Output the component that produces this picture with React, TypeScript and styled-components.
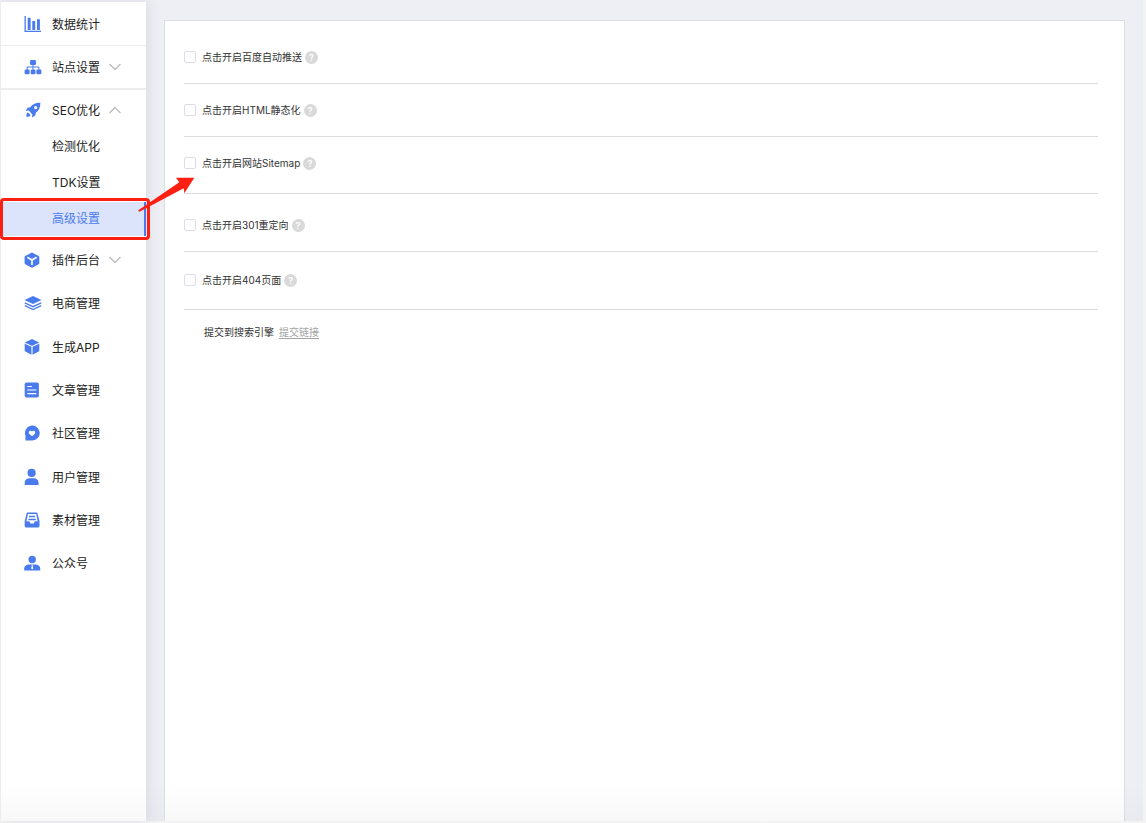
import React from 'react';
import styled, { createGlobalStyle, css } from 'styled-components';

const BLUE = '#4a7bed';

const GlobalStyle = createGlobalStyle`
  *, *::before, *::after { box-sizing: border-box; }
  body {
    margin: 0;
    background: #eeeff4;
    color: #222;
    font-family: Inter, "Noto Sans CJK SC", sans-serif;
    font-size: 12px;
  }
  ul { list-style: none; margin: 0; padding: 0; }
`;

const Page = styled.div`
  display: flex;
  min-height: 100vh;
  border: solid #f3f3f4;
  border-width: 0 3px 2px 1px;
  background: linear-gradient(to top, #e8eaef 0, #eeeff4 36px);
`;

const Sidebar = styled.nav`
  position: relative;
  z-index: 1;
  flex: 0 0 145px;
  margin-top: 2px;
  background: linear-gradient(to top, #f8f8f8 0, #fff 36px);
  box-shadow: 2px 0 12px rgba(60, 60, 90, 0.11);
`;

const itemStyles = css`
  display: flex;
  align-items: center;
  width: 100%;
  padding: 0 0 0 23px;
  border: 0;
  background: none;
  color: #222;
  font: inherit;
  line-height: 16px;
  text-align: left;
  text-decoration: none;
  cursor: pointer;
`;

const Entry = styled.li<{ $line?: number; $groupEnd?: boolean }>`
  border-bottom: ${(p) => p.$line ?? 0}px solid #ededee;
  margin-bottom: ${(p) => (p.$groupEnd ? 1 : 0)}px;
`;

const ItemLink = styled.a`
  ${itemStyles}
  height: 43px;
`;

const ItemButton = styled.button<{ $height?: number }>`
  ${itemStyles}
  height: ${(p) => p.$height ?? 43}px;
`;

const ItemLabel = styled.span`
  padding-top: 2px;
`;

const Icon = styled.svg`
  flex: none;
  width: 18px;
  height: 18px;
  margin-right: 10px;
  fill: ${BLUE};
`;

const ChevronIcon = styled.svg<{ $open?: boolean }>`
  width: 12px;
  height: 8px;
  margin-left: 9px;
  fill: none;
  stroke: #bcbcbc;
  stroke-width: 1.4;
  transform: ${(p) => (p.$open ? 'rotate(180deg)' : 'none')};
`;

const SubList = styled.ul`
  padding-bottom: 1px;
`;

const SubItem = styled.li<{ $active?: boolean }>`
  position: relative;
  height: ${(p) => (p.$active ? 34 : 36)}px;
  margin: ${(p) => (p.$active ? '1px 0' : '0')};
  background: ${(p) => (p.$active ? '#dce4fc' : 'none')};
  border-right: ${(p) => (p.$active ? `2px solid ${BLUE}` : '0')};
`;

const SubLink = styled.a<{ $active?: boolean }>`
  display: flex;
  align-items: center;
  height: 100%;
  padding: 0 0 3px 51px;
  color: ${(p) => (p.$active ? BLUE : '#222')};
  text-decoration: none;
`;

const Highlight = styled.span`
  position: absolute;
  inset: -4px -6px -4px -1px;
  border: 3px solid #fd1f12;
  border-radius: 4px;
  pointer-events: none;
`;

const Arrow = styled.svg`
  position: absolute;
  left: 136px;
  top: -26px;
  width: 60px;
  height: 38px;
  fill: #fd1f12;
  pointer-events: none;
`;

const Main = styled.main`
  display: flex;
  flex: 1;
  min-width: 0;
  padding: 20px 18px 0;
`;

const Panel = styled.section`
  flex: 1;
  padding: 0 26px 0 19px;
  border: 1px solid #dcdde0;
  border-bottom: 0;
  background: linear-gradient(to top, #f8f8f8 0, #fff 36px);
  color: #333;
  font-size: 10px;
  line-height: 16px;
`;

const SettingRow = styled.div<{ $top: number; $bottom: number }>`
  display: flex;
  align-items: center;
  padding: ${(p) => p.$top}px 0 ${(p) => p.$bottom}px;
  border-bottom: 1px solid #dcdddf;
`;

const Checkbox = styled.input`
  appearance: none;
  width: 12px;
  height: 12px;
  margin: 0 6px 0 0;
  border: 1px solid #dcdde6;
  border-radius: 2px;
  background: #fff;
  &:checked { background: ${BLUE}; }
`;

const HelpButton = styled.button`
  display: flex;
  align-items: center;
  justify-content: center;
  width: 13px;
  height: 13px;
  margin-left: 3px;
  padding: 0;
  border: 0;
  border-radius: 50%;
  background: #d9d9d9;
  color: #fff;
  font: 600 9px/13px Inter, sans-serif;
`;

const SubmitRow = styled.div`
  display: flex;
  gap: 5px;
  padding: 14px 0 14px 20px;
`;

const SubmitLink = styled.a`
  color: #a3a3a3;
  text-decoration: underline;
  text-underline-offset: 2px;
`;

const shapes: Record<string, React.ReactNode> = {
  chart: (
    <path d="M.5 1h1.300v14.700h15.200V17H.5zM3.700 2.800h2.900v12.200H3.700zM8.300 6h2.900v9H8.300zM13 4.200h2.900v10.800H13z" />
  ),
  sitemap: (
    <>
      <rect x="6" y="2" width="6" height="5" rx="1.200" />
      <rect x=".6" y="11.600" width="5" height="4.600" rx="1.200" />
      <rect x="6.700" y="11.600" width="4.800" height="4.600" rx="1.200" />
      <rect x="12.400" y="11.600" width="5" height="4.600" rx="1.200" />
      <path d="M9 6v6M3.100 12V9h11.800v3" fill="none" stroke={BLUE} />
    </>
  ),
  rocket: (
    <>
      <path
        fillRule="evenodd"
        d="M16.400 1.800C11.400 1.700 8.300 3.500 6.300 6.200L3.500 6.800 1.700 9.900l3-.3 3.700 3.800-.4 3.100 3.300-1.900.5-2.800c2.900-2.200 4.700-5.200 4.600-10zM11.700 5.100a1.600 1.600 0 1 1 0 3.200 1.600 1.600 0 0 1 0-3.200z"
      />
      <path d="M3.800 11.200l2.900 3c-1 1.400-2.700 1.800-4.300 1.600-.2-1.800.1-3.500 1.400-4.600z" />
    </>
  ),
  plugin: (
    <>
      <path d="M8 1.400l6.700 3.700q.6.400.6 1v6.100q0 .6-.6 1L8.600 16.600q-.6.300-1.200 0L1.200 13.200q-.6-.4-.6-1V6.100q0-.6.6-1L7.400 1.700z" />
      <path d="M3.400 6.300L8 9l4.600-2.700M8 9v4.900" fill="none" stroke="#fff" strokeWidth="1.600" />
    </>
  ),
  layers: (
    <>
      <path d="M9 2l8.500 4L9 10 .5 6z" />
      <path d="M.8 8.900L9 12.700l8.200-3.800M.8 11.700L9 15.500l8.200-3.800" fill="none" stroke={BLUE} strokeWidth="1.300" />
    </>
  ),
  box: (
    <>
      <path d="M8 1l6.700 3.300q.6.400.6 1v7.200q0 .6-.6 1L8 17 1.300 13.500q-.6-.4-.6-1V5.300q0-.6.6-1z" />
      <path d="M.5 5.100L8 8.500l7.500-3.400M8 8.500V17" fill="none" stroke="#fff" strokeWidth="1.100" />
    </>
  ),
  article: (
    <>
      <rect x=".7" y="1.500" width="14.200" height="15" rx="1.800" />
      <path d="M3.300 5.500h4.600M3.300 9h9M3.300 12.600h9" stroke="#fff" strokeWidth="1.200" />
    </>
  ),
  community: (
    <>
      <path d="M1.500 16.400V11.800A7.400 7.400 0 1 1 8.100 16.400z" />
      <path d="M8 12.300L5.400 9.900C3.600 7.800 6.300 5.400 8 7.400c1.700-2 4.400.4 2.600 2.500z" fill="#fff" />
    </>
  ),
  user: (
    <>
      <circle cx="7.600" cy="4.900" r="4.100" />
      <path d="M.7 17v-2.200c0-3.100 2.200-4.600 4.600-4.600h4.600c2.500 0 4.700 1.500 4.700 4.600V17z" />
    </>
  ),
  material: (
    <>
      <path
        fillRule="evenodd"
        d="M3.800 1.400h8.500q1 0 1.200 1l2 7.500v5.200q0 1.300-1.300 1.300H2q-1.300 0-1.300-1.300V9.900l1.900-7.500q.2-1 1.200-1zM4 2.900L2.400 10.200h3l.8 2.300h3.700l.8-2.300h3L12.200 2.900z"
      />
      <path d="M5 5.400h6.200M4.400 8.400h7.400" stroke={BLUE} strokeWidth="1.500" />
    </>
  ),
  official: (
    <>
      <circle cx="8.200" cy="5.500" r="3.700" />
      <path d="M.2 16.500v-2.200c0-2.600 2.700-3.900 5-3.900h6c2.300 0 5 1.300 5 3.900v2.200z" />
      <path d="M7.500 11h1.400l-.3 1 .7 2.300-1.100 1.200-1.100-1.200.7-2.300z" fill="#fff" />
    </>
  ),
};

const NavIcon = ({ name }: { name: string }) => (
  <Icon viewBox="0 0 18 18" aria-hidden="true">
    {shapes[name]}
  </Icon>
);

const Chevron = ({ open }: { open?: boolean }) => (
  <ChevronIcon $open={open} viewBox="0 0 12 8" aria-hidden="true">
    <path d="M.5 1L6 6.500 11.500 1" />
  </ChevronIcon>
);

const links = [
  { icon: 'layers', label: '电商管理', groupEnd: true },
  { icon: 'box', label: '生成APP' },
  { icon: 'article', label: '文章管理' },
  { icon: 'community', label: '社区管理', groupEnd: true },
  { icon: 'user', label: '用户管理' },
  { icon: 'material', label: '素材管理' },
  { icon: 'official', label: '公众号' },
];

const settings = [
  { id: 'push', label: '点击开启百度自动推送', top: 28, bottom: 18 },
  { id: 'html', label: '点击开启HTML静态化', top: 18, bottom: 18 },
  { id: 'sitemap', label: '点击开启网站Sitemap', top: 18, bottom: 22 },
  { id: 'redirect', label: '点击开启301重定向', top: 23, bottom: 18 },
  { id: 'notfound', label: '点击开启404页面', top: 20, bottom: 21 },
];

export default function App() {
  return (
    <>
      <GlobalStyle />
      <Page>
        <Sidebar>
          <ul>
            <Entry $line={1}>
              <ItemLink href="#stats">
                <NavIcon name="chart" />
                <ItemLabel>数据统计</ItemLabel>
              </ItemLink>
            </Entry>
            <Entry $line={2}>
              <ItemButton type="button" $height={42} aria-expanded={false}>
                <NavIcon name="sitemap" />
                <ItemLabel>站点设置</ItemLabel>
                <Chevron />
              </ItemButton>
            </Entry>
            <Entry>
              <ItemButton type="button" $height={39} aria-expanded={true}>
                <NavIcon name="rocket" />
                <ItemLabel>SEO优化</ItemLabel>
                <Chevron open />
              </ItemButton>
              <SubList>
                <SubItem>
                  <SubLink href="#check">检测优化</SubLink>
                </SubItem>
                <SubItem>
                  <SubLink href="#tdk">TDK设置</SubLink>
                </SubItem>
                <SubItem $active>
                  <SubLink href="#advanced" $active aria-current="page">
                    高级设置
                  </SubLink>
                  <Highlight />
                  <Arrow viewBox="0 0 60 38" aria-hidden="true">
                    <path d="M1.300 34.300L42.300 6.300 39 1.700 57.300 1.700 47.300 17.300 46.700 12.300 2.500 35.700q-1 0-1.200-1.400z" />
                  </Arrow>
                </SubItem>
              </SubList>
            </Entry>
            <Entry>
              <ItemButton type="button" aria-expanded={false}>
                <NavIcon name="plugin" />
                <ItemLabel>插件后台</ItemLabel>
                <Chevron />
              </ItemButton>
            </Entry>
            {links.map((l) => (
              <Entry key={l.icon} $groupEnd={l.groupEnd}>
                <ItemLink href={`#${l.icon}`}>
                  <NavIcon name={l.icon} />
                  <ItemLabel>{l.label}</ItemLabel>
                </ItemLink>
              </Entry>
            ))}
          </ul>
        </Sidebar>
        <Main>
          <Panel>
            {settings.map((s) => (
              <SettingRow key={s.id} $top={s.top} $bottom={s.bottom}>
                <Checkbox type="checkbox" id={s.id} />
                <label htmlFor={s.id}>{s.label}</label>
                <HelpButton type="button">?</HelpButton>
              </SettingRow>
            ))}
            <SubmitRow>
              <span>提交到搜索引擎</span>
              <SubmitLink href="#submit">提交链接</SubmitLink>
            </SubmitRow>
          </Panel>
        </Main>
      </Page>
    </>
  );
}
